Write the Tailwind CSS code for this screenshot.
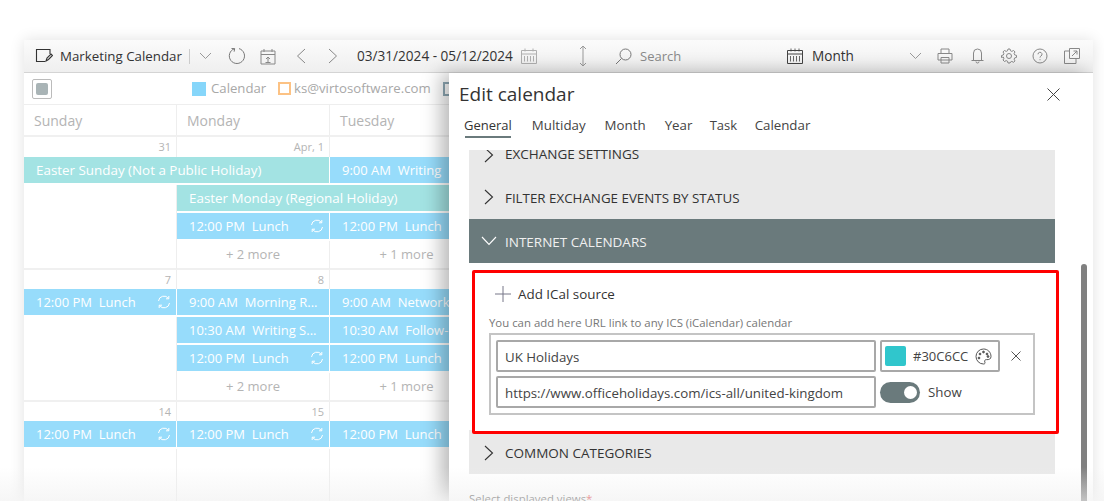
<!doctype html>
<html>
<head>
<meta charset="utf-8">
<script src="https://cdn.jsdelivr.net/npm/@tailwindcss/browser@4"></script>
</head>
<body class="bg-white overflow-hidden font-['Open_Sans','Noto_Sans',sans-serif]">
<div class="relative w-[1104px] h-[501px] overflow-hidden pl-[24px] pt-[40px]">
  <div class="relative w-[1069px] h-[461px] bg-white shadow-[0_0_14px_rgba(0,0,0,0.12)] overflow-hidden">
    <!-- toolbar -->
    <div class="relative h-[33px] flex items-center border-b border-[#d4d4d4] bg-gradient-to-b from-[#fbfbfb] to-[#efefef] text-[13.6px] text-[#333]">
      <svg class="ml-[11px] w-[18px] h-[16px] shrink-0" viewBox="0 0 18 16" fill="none" stroke="#333" stroke-width="1.100"><path d="M10 13.500H1.500V1.500H15V6"/><path d="M11 13l1-3 4-4 1.500 1.500-4 4z"/></svg>
      <span class="ml-[7px] w-[122px] mt-[1px] text-[13.300px] whitespace-nowrap">Marketing Calendar</span>
      <span class="ml-[7px] w-px h-[15px] bg-[#ccc]"></span>
      <svg class="ml-[9px] w-[13px] h-[8px]" viewBox="0 0 13 8" fill="none" stroke="#999"><path d="M1 1l5.500 5.500L12 1"/></svg>
      <svg class="ml-[16px] w-[18px] h-[18px]" viewBox="0 0 18 18" fill="none" stroke="#777"><path d="M6.500 1.700A7.600 7.600 0 1 0 11 1.600"/><path d="M3.500 1.500l3.200.2-.6 3"/></svg>
      <svg class="ml-[14px] w-[16px] h-[17px]" viewBox="0 0 16 17" fill="none" stroke="#888"><path d="M1 3h14v13H1zM1 6.500h14M4 1v3M12 1v3"/><path d="M8 14.500V9M6 11l2-2 2 2M5.500 14.500h5"/></svg>
      <svg class="ml-[20px] w-[10px] h-[16px]" viewBox="0 0 10 16" fill="none" stroke="#888"><path d="M9 1L1.500 8 9 15"/></svg>
      <svg class="ml-[22px] w-[10px] h-[16px]" viewBox="0 0 10 16" fill="none" stroke="#888"><path d="M1 1l7.500 7L1 15"/></svg>
      <span class="ml-[19px] w-[156px] mt-[1px] whitespace-nowrap">03/31/2024 - 05/12/2024</span>
      <svg class="ml-[8px] w-[16px] h-[16px]" viewBox="0 0 16 16" fill="none" stroke="#b0b0b0"><path d="M.5 2.500h15v13H.5zM.5 6h15M4 .5v3M12 .5v3M3.500 8v5.500M6.500 8v5.500M9.500 8v5.500M12.500 8v5.500"/></svg>
      <svg class="ml-[41px] w-[10px] h-[22px]" viewBox="0 0 10 22" fill="none" stroke="#999"><path d="M5 1v20M2 4l3-3 3 3M2 18l3 3 3-3"/></svg>
      <svg class="ml-[27px] w-[17px] h-[17px]" viewBox="0 0 17 17" fill="none" stroke="#777"><circle cx="10.500" cy="6.500" r="5.500"/><path d="M6.500 10.500L1 16"/></svg>
      <span class="ml-[8px] w-[40px] mt-[2px] text-[#8a8a8a] text-[13px] whitespace-nowrap">Search</span>
      <svg class="ml-[107px] w-[16px] h-[16px]" viewBox="0 0 16 16" fill="none" stroke="#444"><path d="M.5 2.500h15v13H.5zM.5 6h15"/><path d="M4 .5v3M12 .5v3M8 .5v3M3.500 8v5.500M6.500 8v5.500M9.500 8v5.500M12.500 8v5.500" stroke-width=".8"/></svg>
      <span class="ml-[9px] w-[41px] mt-[1px] whitespace-nowrap">Month</span>
      <svg class="ml-[56px] w-[13px] h-[8px]" viewBox="0 0 13 8" fill="none" stroke="#999"><path d="M1 1l5.500 5.500L12 1"/></svg>
      <svg class="ml-[15px] w-[16px] h-[16px]" viewBox="0 0 16 16" fill="none" stroke="#888"><path d="M4 5V1h8v4M1 5.500h14v6.500H1zM4 9.500h8V15H4z"/></svg>
      <svg class="ml-[18px] w-[13px] h-[16px]" viewBox="0 0 13 16" fill="none" stroke="#888"><path d="M2.500 12V5a4 4 0 0 1 8 0v7M.5 12.500h12M5 13.500a1.500 1.500 0 0 0 3 0"/></svg>
      <svg class="ml-[17px] w-[16px] h-[16px]" viewBox="0 0 16 16" fill="none" stroke="#888"><circle cx="8" cy="8" r="2.500"/><path d="M7 1h2l.5 1.800 1.300.6 1.700-.9L14 3.900l-.9 1.700.6 1.300 1.800.5v2l-1.800.5-.6 1.300.9 1.700-1.500 1.400-1.700-.9-1.300.6L9 15H7l-.5-1.800-1.300-.6-1.700.9L2 12l.9-1.700-.6-1.300L.5 9.500v-2l1.800-.5.6-1.300L2 3.900l1.500-1.400 1.700.9 1.300-.6z"/></svg>
      <svg class="ml-[15px] w-[16px] h-[16px]" viewBox="0 0 16 16" fill="none" stroke="#888"><circle cx="8" cy="8" r="7"/><path d="M6 6.300a2 2 0 1 1 3 1.700c-.7.400-1 .8-1 1.600M8 11.200v1" /></svg>
      <svg class="ml-[16px] w-[16px] h-[16px]" viewBox="0 0 16 16" fill="none" stroke="#888"><path d="M5 3H.5v12.500H12V11M5.500 .5h10v10h-10zM8 8l5-5M9.500 3H13v3.500"/></svg>
    </div>
    <!-- legend -->
    <div class="flex items-center h-[32px] border-b border-[#eee] text-[13.200px] text-[#a8a8a8] bg-white">
      <span class="ml-[8px] w-[20px] h-[20px] rounded-[2px] border border-[#bbb] flex items-center justify-center"><span class="w-[12px] h-[12px] rounded-[2px] bg-[#a9b4b6]"></span></span>
      <span class="ml-[140px] w-[14px] h-[14px] bg-[#86d6fa]"></span>
      <span class="ml-[5px] w-[55px] whitespace-nowrap">Calendar</span>
      <span class="ml-[12px] w-[13px] h-[13px] border-2 border-[#fcc284]"></span>
      <span class="ml-[3px] w-[138px] whitespace-nowrap">ks@virtosoftware.com</span>
      <span class="ml-[11px] w-[14px] h-[14px] border-2 border-[#8fa9b5]"></span>
    </div>
    <!-- day header -->
    <div class="grid grid-cols-[153px_153px_153px] h-[32px] border-b-2 border-[#f0f0f0] text-[14px] text-[#b4b4b4]">
      <div class="pl-[10px] flex items-center border-r border-[#eee]">Sunday</div>
      <div class="pl-[10px] flex items-center border-r border-[#eee]">Monday</div>
      <div class="pl-[10px] flex items-center">Tuesday</div>
    </div>
    <!-- week 1 -->
    <div class="grid grid-cols-[153px_153px_153px] grid-rows-[20px_28px_28px_28px_28px] h-[133px] border-b-2 border-[#f0f0f0] text-[13px] text-white">
      <div class="border-r border-[#eee] text-right pr-[5px] text-[11px] leading-[20px] text-[#b4b4b4]">31</div>
      <div class="border-r border-[#eee] text-right pr-[5px] text-[11px] leading-[20px] text-[#b4b4b4]">Apr, 1</div>
      <div></div>
      <div class="col-span-2 h-[26px] mr-px bg-[#a3e3e3] pl-[12px] leading-[26px] text-[13.4px] whitespace-nowrap">Easter Sunday (Not a Public Holiday)</div>
      <div class="h-[26px] bg-[#97dcfb] pl-[12px] leading-[26px] whitespace-nowrap overflow-hidden">9:00 AM&nbsp; Writing</div>
      <div class="row-span-3 border-r border-[#eee]"></div>
      <div class="col-span-2 h-[26px] bg-[#a3e3e3] pl-[12px] leading-[26px] text-[13.4px] whitespace-nowrap">Easter Monday (Regional Holiday)</div>
      <div class="h-[26px] mr-px bg-[#97dcfb] pl-[12px] leading-[26px] flex justify-between items-center pr-[5px]"><span>12:00 PM&nbsp; Lunch</span><svg class="w-[14px] h-[14px]" viewBox="0 0 14 14" fill="none" stroke="#fff"><path d="M1.500 6A5.500 5.500 0 0 1 11.500 3.500M12.500 8A5.500 5.500 0 0 1 2.500 10.500M11.800 1v2.800H9M2.200 13v-2.800H5"/></svg></div>
      <div class="h-[26px] bg-[#97dcfb] pl-[12px] leading-[26px] whitespace-nowrap">12:00 PM&nbsp; Lunch</div>
      <div class="border-r border-[#eee] text-center text-[#b4b4b4] leading-[26px]">+ 2 more</div>
      <div class="text-center text-[#b4b4b4] leading-[26px]">+ 1 more</div>
    </div>
    <!-- week 2 -->
    <div class="grid grid-cols-[153px_153px_153px] grid-rows-[19px_28px_28px_28px_27px] h-[132px] border-b-2 border-[#f0f0f0] text-[13px] text-white">
      <div class="border-r border-[#eee] text-right pr-[5px] text-[11px] leading-[19px] text-[#b4b4b4]">7</div>
      <div class="border-r border-[#eee] text-right pr-[5px] text-[11px] leading-[19px] text-[#b4b4b4]">8</div>
      <div></div>
      <div class="h-[26px] mr-px bg-[#97dcfb] pl-[12px] leading-[26px] flex justify-between items-center pr-[5px]"><span>12:00 PM&nbsp; Lunch</span><svg class="w-[14px] h-[14px]" viewBox="0 0 14 14" fill="none" stroke="#fff"><path d="M1.500 6A5.500 5.500 0 0 1 11.500 3.500M12.500 8A5.500 5.500 0 0 1 2.500 10.500M11.800 1v2.800H9M2.200 13v-2.800H5"/></svg></div>
      <div class="h-[26px] mr-px bg-[#97dcfb] pl-[12px] leading-[26px] whitespace-nowrap">9:00 AM&nbsp; Morning R...</div>
      <div class="h-[26px] bg-[#97dcfb] pl-[12px] leading-[26px] whitespace-nowrap overflow-hidden">9:00 AM&nbsp; Network</div>
      <div class="row-span-3 border-r border-[#eee]"></div>
      <div class="h-[26px] mr-px bg-[#97dcfb] pl-[12px] leading-[26px] whitespace-nowrap">10:30 AM&nbsp; Writing S...</div>
      <div class="h-[26px] bg-[#97dcfb] pl-[12px] leading-[26px] whitespace-nowrap overflow-hidden">10:30 AM&nbsp; Follow-</div>
      <div class="h-[26px] mr-px bg-[#97dcfb] pl-[12px] leading-[26px] flex justify-between items-center pr-[5px]"><span>12:00 PM&nbsp; Lunch</span><svg class="w-[14px] h-[14px]" viewBox="0 0 14 14" fill="none" stroke="#fff"><path d="M1.500 6A5.500 5.500 0 0 1 11.500 3.500M12.500 8A5.500 5.500 0 0 1 2.500 10.500M11.800 1v2.800H9M2.200 13v-2.800H5"/></svg></div>
      <div class="h-[26px] bg-[#97dcfb] pl-[12px] leading-[26px] whitespace-nowrap">12:00 PM&nbsp; Lunch</div>
      <div class="border-r border-[#eee] text-center text-[#b4b4b4] leading-[26px]">+ 2 more</div>
      <div class="text-center text-[#b4b4b4] leading-[26px]">+ 1 more</div>
    </div>
    <!-- week 3 -->
    <div class="grid grid-cols-[153px_153px_153px] grid-rows-[19px_28px_1fr] h-[100px] text-[13px] text-white">
      <div class="border-r border-[#eee] text-right pr-[5px] text-[11px] leading-[19px] text-[#b4b4b4]">14</div>
      <div class="border-r border-[#eee] text-right pr-[5px] text-[11px] leading-[19px] text-[#b4b4b4]">15</div>
      <div></div>
      <div class="h-[26px] mr-px bg-[#97dcfb] pl-[12px] leading-[26px] flex justify-between items-center pr-[5px]"><span>12:00 PM&nbsp; Lunch</span><svg class="w-[14px] h-[14px]" viewBox="0 0 14 14" fill="none" stroke="#fff"><path d="M1.500 6A5.500 5.500 0 0 1 11.500 3.500M12.500 8A5.500 5.500 0 0 1 2.500 10.500M11.800 1v2.800H9M2.200 13v-2.800H5"/></svg></div>
      <div class="h-[26px] mr-px bg-[#97dcfb] pl-[12px] leading-[26px] flex justify-between items-center pr-[5px]"><span>12:00 PM&nbsp; Lunch</span><svg class="w-[14px] h-[14px]" viewBox="0 0 14 14" fill="none" stroke="#fff"><path d="M1.500 6A5.500 5.500 0 0 1 11.500 3.500M12.500 8A5.500 5.500 0 0 1 2.500 10.500M11.800 1v2.800H9M2.200 13v-2.800H5"/></svg></div>
      <div class="h-[26px] bg-[#97dcfb] pl-[12px] leading-[26px] whitespace-nowrap">12:00 PM&nbsp; Lunch</div>
      <div class="border-r border-[#eee]"></div>
      <div class="border-r border-[#eee]"></div>
      <div></div>
    </div>

    <!-- drawer panel -->
    <div class="absolute left-[425px] top-[33px] w-[644px] h-[428px] bg-white shadow-[-8px_0_18px_rgba(0,0,0,0.28)]">
      <div class="flex items-center justify-between h-[42px] pl-[10px] pr-[33px]">
        <span class="text-[19px] text-[#333]">Edit calendar</span>
        <svg class="w-[13px] h-[13px]" viewBox="0 0 13 13" fill="none" stroke="#444"><path d="M.5.5l12 12M12.500.5l-12 12"/></svg>
      </div>
      <div class="flex ml-[15px] gap-[19px] text-[13.300px] text-[#444] h-[24px] leading-[20px]">
        <span class="relative text-[13px] font-medium text-[#333] mr-[1px]">General<span class="absolute left-[1px] right-[1px] top-[21px] h-[2px] bg-[#6a7a7c]"></span></span>
        <span>Multiday</span><span>Month</span><span class="w-[26px] whitespace-nowrap">Year</span><span class="w-[26px] text-[13px] whitespace-nowrap">Task</span><span>Calendar</span>
      </div>
      <div class="relative ml-[20px] mt-[11px] w-[586px] text-[13.500px] text-[#333]">
        <div class="h-[25px] bg-[#e9e9e9] flex items-center overflow-hidden"><div class="flex items-center mt-[-16px]">
          <svg class="ml-[15px] w-[10px] h-[16px]" viewBox="0 0 10 16" fill="none" stroke="#333" stroke-width="1.100"><path d="M1 1l7.500 7L1 15"/></svg>
          <span class="ml-[11px]">EXCHANGE SETTINGS</span></div>
        </div>
        <div class="h-[44px] bg-[#e9e9e9] flex items-center">
          <svg class="ml-[15px] w-[10px] h-[16px]" viewBox="0 0 10 16" fill="none" stroke="#333" stroke-width="1.100"><path d="M1 1l7.500 7L1 15"/></svg>
          <span class="ml-[11px] mt-[2px] text-[13.350px]">FILTER EXCHANGE EVENTS BY STATUS</span>
        </div>
        <div class="h-[44px] bg-[#6a7a7c] flex items-center text-[#f0f0f0]">
          <svg class="ml-[12px] w-[16px] h-[10px]" viewBox="0 0 16 10" fill="none" stroke="#fff" stroke-width="1.100"><path d="M1 1l7 7.500L15 1"/></svg>
          <span class="ml-[8px] mt-[2px]">INTERNET CALENDARS</span>
        </div>
        <div class="h-[168px] pt-[7px]">
          <div class="relative h-[164px] w-[587px] ml-[3px] border-[3px] border-[#ff0000] rounded-[2px] bg-white pl-[14px]">
            <div class="flex items-center h-[42px] pl-[6px] text-[13.400px] text-[#333]">
              <svg class="w-[16px] h-[16px]" viewBox="0 0 16 16" fill="none" stroke="#778"><path d="M8 0v16M0 8h16"/></svg>
              <span class="ml-[7px]">Add ICal source</span>
            </div>
            <div class="h-[16px] text-[11.400px] leading-[16px] text-[#777] whitespace-nowrap">You can add here URL link to any ICS (iCalendar) calendar</div>
            <div class="mt-[2px] w-[546px] h-[82px] border-2 border-[#c4c4c4] pl-[5px] pt-[5px] grid grid-cols-[381px_120px_36px] grid-rows-[32px_32px] gap-y-[4px] text-[13.300px] text-[#444]">
              <div class="border-2 border-[#a8a8a8] rounded-[2px] pl-[7px] leading-[30px] h-[32px] w-[380px]">UK Holidays</div>
              <div class="ml-[3px] w-[120px] h-[32px] border-2 border-[#a8a8a8] rounded-[2px] flex items-center pl-[3px] text-[13px]">
                <span class="w-[21px] h-[20px] rounded-[2px] bg-[#30c6cc]"></span>
                <span class="ml-[7px] mt-[1px] w-[56px] whitespace-nowrap">#30C6CC</span>
                <svg class="ml-[6px] w-[17px] h-[17px]" viewBox="0 0 17 17" fill="none" stroke="#555"><path d="M8.500 1a7.500 7.500 0 0 0 0 15c1.500 0 1.800-1 1.300-2-.6-1.300.3-2.500 1.700-2.400 2.500.3 4.500-.6 4.500-3.100C16 4 12.500 1 8.500 1z"/><circle cx="5" cy="6" r=".9" fill="#555"/><circle cx="8.500" cy="4" r=".9" fill="#555"/><circle cx="12" cy="6" r=".9" fill="#555"/><circle cx="4" cy="10" r=".9" fill="#555"/><circle cx="13" cy="8.500" r=".9" fill="#555"/></svg>
              </div>
              <div class="flex items-center"><svg class="ml-[14px] w-[10px] h-[10px]" viewBox="0 0 10 10" fill="none" stroke="#555"><path d="M.5.5l9 9M9.500.5l-9 9"/></svg></div>
              <div class="border-2 border-[#a8a8a8] rounded-[2px] pl-[7px] leading-[30px] h-[32px] w-[380px] whitespace-nowrap">https://www.officeholidays.com/ics-all/united-kingdom</div>
              <div class="ml-[3px] flex items-center">
                <span class="w-[40px] h-[21px] rounded-full bg-[#6a7a7c] flex items-center justify-end pr-[3px]"><span class="w-[13px] h-[13px] rounded-full bg-white"></span></span>
                <span class="ml-[8px] mt-[1px]">Show</span>
              </div>
              <div></div>
            </div>
          </div>
        </div>
        <div class="h-[44px] mt-[-1px] pt-[1px] bg-[#e9e9e9] flex items-center">
          <svg class="ml-[15px] w-[10px] h-[16px]" viewBox="0 0 10 16" fill="none" stroke="#333" stroke-width="1.100"><path d="M1 1l7.500 7L1 15"/></svg>
          <span class="ml-[11px] mt-[1px]">COMMON CATEGORIES</span>
        </div>
        <div class="mt-[16px] text-[11.400px] text-[#555]">Select displayed views<span class="text-[#d33]">*</span></div>
      </div>
      <!-- scrollbar -->
      <div class="absolute left-[632px] top-[191px] w-[6px] h-[240px] rounded-full bg-[#808080]"></div>
    </div>
  </div>
  <!-- bottom fade -->
  <div class="absolute left-0 right-0 bottom-0 h-[34px] bg-gradient-to-b from-white/0 to-[#f0f0f0]/60"></div>
</div>
</body>
</html>
